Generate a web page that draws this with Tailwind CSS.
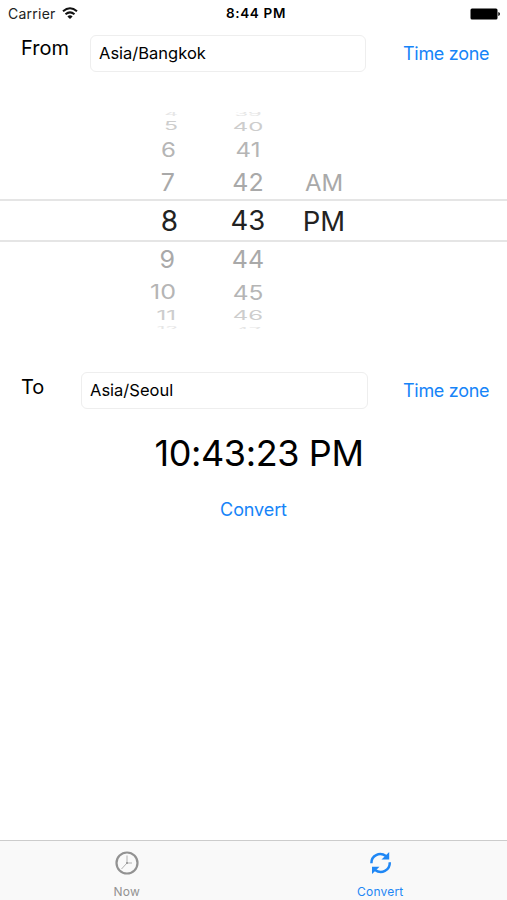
<!DOCTYPE html>
<html lang="en">
<head>
<meta charset="utf-8">
<title>Convert</title>
<script src="https://cdn.jsdelivr.net/npm/@tailwindcss/browser@4"></script>
</head>
<body class="w-[507px] h-[900px] overflow-hidden bg-white text-black font-['Inter',sans-serif]">
<div class="flex h-[900px] w-[507px] flex-col whitespace-nowrap">
  <header class="grid h-[27px] grid-cols-3 items-center pl-2 pr-[7px] text-[13px]">
    <div class="flex items-center gap-[6px]">
      <span class="text-[14px] tracking-[0.25px] text-[#222]">Carrier</span>
      <svg class="-mt-[2px] h-3 w-4" viewBox="0 0 16 12" fill="none" stroke="#111" stroke-width="2"><path d="M1 4.3Q8-1.8 15 4.3M3.5 7.3Q8 3.5 12.5 7.3"/><path d="M8 12 5.4 9.4Q8 7.3 10.6 9.4Z" fill="#111" stroke="none"/></svg>
    </div>
    <span class="pl-[4px] text-center text-[13.5px] font-semibold tracking-[0.65px]">8:44 PM</span>
    <svg class="h-3 w-[30px] justify-self-end" viewBox="0 0 30 12"><rect x="0.5" y="0.5" width="27" height="11" rx="1.5"/><path d="M28.3 4q1.7.7 1.7 2t-1.7 2Z"/></svg>
  </header>

  <section class="flex h-[45px] items-start pt-[8px]">
    <label class="ml-[21px] w-[69px] text-[20px] leading-[26px]">From</label>
    <div class="flex h-[37px] w-[276px] items-center rounded-[6px] border border-[#eee] pl-2 text-[16.5px]">Asia/Bangkok</div>
    <button class="ml-[37px] mt-[6px] text-[18px] leading-[26px] tracking-[-0.3px] text-[#1684f8]">Time zone</button>
  </section>

  <section class="relative mt-10 h-[217px] overflow-hidden text-[#a9a9a9]">
    <div class="absolute top-[87px] h-[43px] w-full border-y-2 border-[#e5e5e5]"></div>
    <div class="flex h-[217px]">
      <div class="flex w-[178px] flex-col text-right">
        <div class="flex h-[7px] items-center justify-end overflow-hidden text-[21px] text-[#e6e6e6]"><span class="-translate-y-[2px] scale-y-[.3]">4</span></div>
        <div class="flex h-[15px] items-center justify-end text-[23px] text-[#cdcdcd]"><span class="scale-y-[.5]">5</span></div>
        <div class="flex h-[31px] items-center justify-end pr-[2px] text-[24px] text-[#b5b5b5]"><span class="scale-y-[.83]">6</span></div>
        <div class="flex h-[35px] items-center justify-end pr-[3px] text-[25px]"><span class="scale-y-[.95]">7</span></div>
        <div class="flex h-[42px] items-center justify-end text-[28px] text-[#222]">8</div>
        <div class="flex h-[35px] items-center justify-end pr-[3px] text-[25px]"><span class="scale-y-[.95]">9</span></div>
        <div class="flex h-[30px] items-center justify-end pr-[2px] text-[25px] text-[#b5b5b5]"><span class="translate-y-px scale-y-[.8]">10</span></div>
        <div class="flex h-[16px] items-center justify-end pr-[2px] text-[24px] text-[#cdcdcd]"><span class="translate-y-px scale-y-[.55]">11</span></div>
        <div class="flex h-[6px] items-center justify-end overflow-hidden text-[21px] text-[#e6e6e6]"><span class="translate-y-[3px] scale-y-[.3]">12</span></div>
      </div>
      <div class="ml-10 flex w-[60px] flex-col text-center">
        <div class="flex h-[7px] items-center justify-center overflow-hidden text-[22px] text-[#e6e6e6]"><span class="-translate-y-[2px] scale-y-[.3]">39</span></div>
        <div class="flex h-[15px] items-center justify-center text-[24px] text-[#cdcdcd]"><span class="scale-y-[.5]">40</span></div>
        <div class="flex h-[31px] items-center justify-center text-[24px] text-[#b5b5b5]"><span class="scale-y-[.83]">41</span></div>
        <div class="flex h-[35px] items-center justify-center text-[25px]"><span class="scale-y-[.95]">42</span></div>
        <div class="flex h-[42px] items-center justify-center text-[27.5px] text-[#222]">43</div>
        <div class="flex h-[35px] items-center justify-center text-[25px]"><span class="scale-y-[.95]">44</span></div>
        <div class="flex h-[30px] items-center justify-center text-[24.5px] text-[#b5b5b5]"><span class="translate-y-px scale-y-[.8]">45</span></div>
        <div class="flex h-[16px] items-center justify-center text-[24px] text-[#cdcdcd]"><span class="translate-y-px scale-y-[.55]">46</span></div>
        <div class="flex h-[6px] items-center justify-center overflow-hidden text-[22px] text-[#e6e6e6]"><span class="translate-y-[3px] scale-y-[.3]">47</span></div>
      </div>
      <div class="ml-4 flex w-[60px] flex-col pt-[53px]">
        <div class="flex h-[35px] items-center justify-center text-[24px]"><span class="scale-y-[.97]">AM</span></div>
        <div class="flex h-[42px] items-center justify-center pt-px text-[27.5px] text-[#222]">PM</div>
      </div>
    </div>
  </section>

  <section class="mt-[43px] flex h-[37px] items-start">
    <label class="ml-[21px] w-[60px] pt-[2px] text-[20px] leading-[26px]">To</label>
    <div class="flex h-[37px] w-[287px] items-center rounded-[6px] border border-[#eee] pl-2 text-[16.5px]">Asia/Seoul</div>
    <button class="ml-[35px] mt-[6px] text-[18px] leading-[26px] tracking-[-0.3px] text-[#1684f8]">Time zone</button>
  </section>

  <div class="mt-[20px] pl-[11px] text-center text-[36px] leading-[48px] tracking-[-0.4px]">10:43:23 PM</div>
  <button class="mt-[20px] self-center text-[18px] leading-[26px] tracking-[-0.1px] text-[#1684f8]">Convert</button>

  <nav class="mt-auto grid h-[60px] grid-cols-2 border-t border-[#ccc] bg-[#f9f9f9] text-[12px]">
    <div class="flex flex-col items-center pt-[10px] text-[#929292]">
      <svg class="h-6 w-6" viewBox="0 0 24 24" fill="none" stroke="currentColor"><circle cx="12" cy="12" r="10.5" stroke-width="2.2"/><path d="M12 4.5V12L6.5 18M12 12h5" stroke-width=".7"/><circle cx="12" cy="12" r="1" fill="currentColor" stroke="none"/></svg>
      <span class="mt-[9px] leading-4 tracking-[0.2px]">Now</span>
    </div>
    <div class="flex flex-col items-center pt-[10px] text-[#1f87f5]">
      <svg class="h-6 w-6" viewBox="0 0 24 24" fill="none" stroke="currentColor" stroke-width="2.5"><path d="M3.4 12.2C3.2 4.5 11.5.5 18 5M21.8 11.2C22 19.5 13.5 23.5 7 19"/><path d="M21.2 1v7.4H13.5ZM4 23v-7.2H11.5Z" fill="currentColor" stroke="none"/></svg>
      <span class="mt-[9px] leading-4 tracking-[0.2px]">Convert</span>
    </div>
  </nav>
</div>
</body>
</html>
